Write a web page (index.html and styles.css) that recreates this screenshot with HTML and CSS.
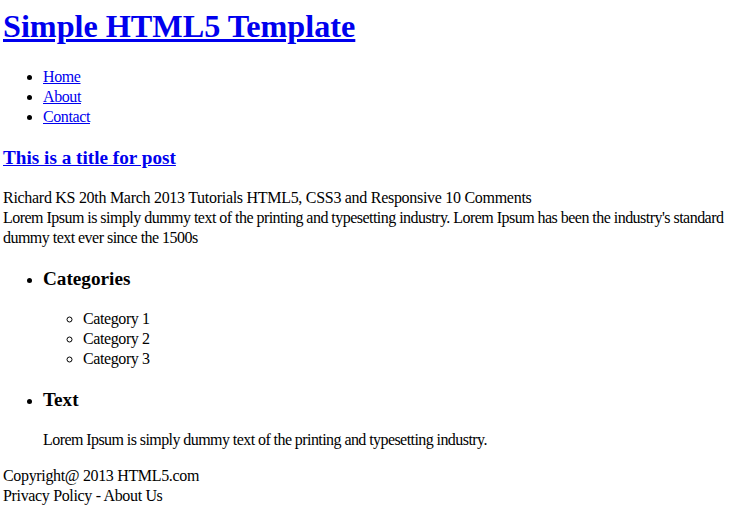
FILE: index.html
```html
<!DOCTYPE html>
<html>
<head>
<meta charset="utf-8">
<title>Simple HTML5 Template</title>
<link rel="stylesheet" href="styles.css">
</head>
<body class="page">
<header class="site-header">
  <h1 class="site-title"><a href="#">Simple HTML5 Template</a></h1>
  <nav>
    <ul class="menu">
      <li><a href="#">Home</a></li>
      <li><a href="#">About</a></li>
      <li><a href="#">Contact</a></li>
    </ul>
  </nav>
</header>
<article class="post">
  <h3 class="post-title"><a href="#">This is a title for post</a></h3>
  <div class="post-meta">Richard KS 20th March 2013 Tutorials HTML5, CSS3 and Responsive 10 Comments</div>
  <div class="post-body">Lorem Ipsum is simply dummy text of the printing and typesetting industry. Lorem Ipsum has been the industry's standard dummy text ever since the 1500s</div>
</article>
<aside>
  <ul class="widgets">
    <li>
      <h3 class="widget-title">Categories</h3>
      <ul class="cats">
        <li>Category 1</li>
        <li>Category 2</li>
        <li>Category 3</li>
      </ul>
    </li>
    <li>
      <h3 class="widget-title">Text</h3>
      <p class="widget-text">Lorem Ipsum is simply dummy text of the printing and typesetting industry.</p>
    </li>
  </ul>
</aside>
<footer class="site-footer">
  <div>Copyright@ 2013 HTML5.com</div>
  <div>Privacy Policy - About Us</div>
</footer>
</body>
</html>
```
FILE: styles.css
```css
html { background: #fff; }
.page {
  margin: 0;
  padding: 6px 3px 0;
  font-family: "Liberation Serif", "Times New Roman", serif;
  font-size: 16px;
  line-height: 20px;
  color: #000;
}
a { color: #0000ee; }
.site-title {
  font-size: 32.2px;
  line-height: 40px;
  font-weight: bold;
  margin: 0 0 21.44px;
}
.menu {
  margin: 16px 0;
  padding-left: 40px;
  list-style: disc;
  letter-spacing: -0.4px;
}
.post-title,
.widget-title {
  font-size: 19.2px;
  line-height: 23.4px;
  font-weight: bold;
  margin: 18.72px 0;
}
.post-meta { letter-spacing: -0.29px; }
.post-body { letter-spacing: -0.53px; }
.widgets {
  margin: 16px 0;
  padding-left: 40px;
  list-style: disc;
}
.cats {
  margin: 0;
  padding-left: 40px;
  list-style: circle;
  letter-spacing: -0.4px;
}
.widget-text {
  margin: 16px 0;
  letter-spacing: -0.57px;
}
.site-footer { letter-spacing: -0.34px; }
```
